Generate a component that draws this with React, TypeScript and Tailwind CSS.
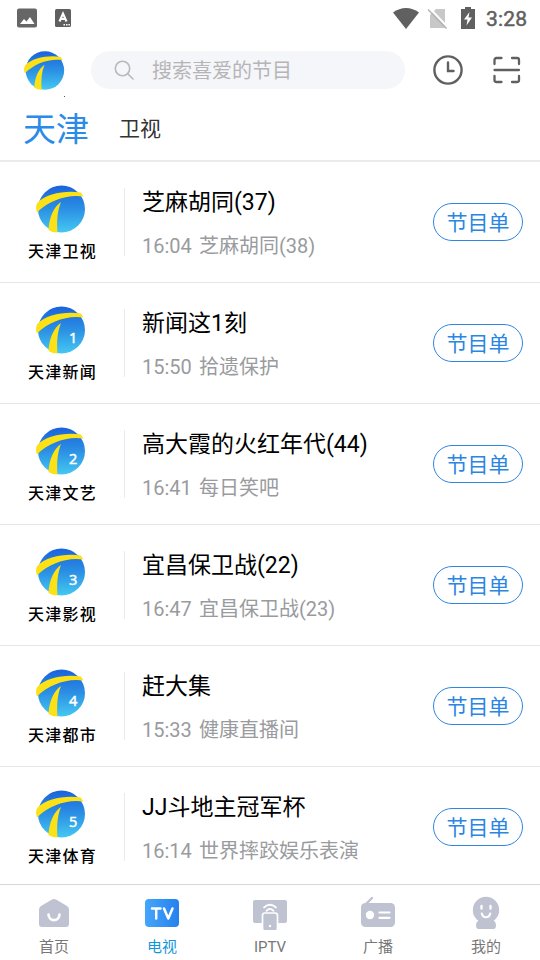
import React, { useState } from 'react';

const channels = [
  { name: '天津卫视', badge: '', title: '芝麻胡同(37)', time: '16:04', next: '芝麻胡同(38)' },
  { name: '天津新闻', badge: '1', title: '新闻这1刻', time: '15:50', next: '拾遗保护' },
  { name: '天津文艺', badge: '2', title: '高大霞的火红年代(44)', time: '16:41', next: '每日笑吧' },
  { name: '天津影视', badge: '3', title: '宜昌保卫战(22)', time: '16:47', next: '宜昌保卫战(23)' },
  { name: '天津都市', badge: '4', title: '赶大集', time: '15:33', next: '健康直播间' },
  { name: '天津体育', badge: '5', title: 'JJ斗地主冠军杯', time: '16:14', next: '世界摔跤娱乐表演' },
];

function ChannelLogo({ id, size, badge }: { id: string; size: number; badge?: string }) {
  return (
    <svg width={size} height={size} viewBox="0 0 50 50" className="shrink-0">
      <defs>
        <linearGradient id={id} x1="0" y1="0" x2="0" y2="1">
          <stop offset="0" stopColor="#1b62dc" />
          <stop offset="0.5" stopColor="#2b90e4" />
          <stop offset="1" stopColor="#45c8f2" />
        </linearGradient>
      </defs>
      <circle cx="25.500" cy="25" r="23.5" fill={`url(#${id})`} />
      <path d="M1 28.500C-0.500 24.500 0 21.500 1.300 19C10 9 31 6 44.800 8.500L47.500 12.500C31 10 13 16.500 1 28.500Z" fill="#fbe116" />
      <path d="M25 18C18 22.500 13 33.500 12.500 46Q16.500 48.500 21.500 48.500C20.500 36.500 21.500 26.500 25 18Z" fill="#fbe116" />
      {badge && (
        <text x="37.200" y="38" textAnchor="middle" fontSize="14.500" fill="#fff" stroke="#fff" strokeWidth="0.500" fontFamily="Open Sans, sans-serif">{badge}</text>
      )}
    </svg>
  );
}

function StatusBar() {
  return (
    <div className="flex h-9 items-center pl-[17px] pr-3 text-[#606060]">
      <svg width="20" height="20" viewBox="0 0 20 20">
        <rect x="0" y="0.500" width="20" height="19" rx="2" fill="#666" />
        <path d="M3 16L7 11L9.500 13.500L13 9L17.500 16Z" fill="#fff" />
      </svg>
      <svg width="16" height="18" viewBox="0 0 16 18" className="ml-[18px]">
        <rect width="16" height="18" rx="1.500" fill="#606060" />
        <path d="M4.500 12.500L8 4.500L11.500 12.500M5.800 10H10.200" stroke="#fff" strokeWidth="2.100" fill="none" />
        <path d="M8.500 15.700h1.500M11 15.700h1.500M13.400 15.700h1.500" stroke="#fff" strokeWidth="1.500" />
      </svg>
      <svg width="26" height="21" viewBox="0 0 26 21" className="ml-auto">
        <path d="M0 4.500C8-1.500 18-1.500 26 4.500L13 21Z" fill="#606060" />
      </svg>
      <svg width="20" height="21" viewBox="0 0 20 21" className="ml-[9px]">
        <path d="M8 1H17V20H2V7Z" fill="#c8c8c8" />
        <path d="M1.500 0L20 19.500" stroke="#fff" strokeWidth="2" />
        <path d="M0 1.500L18.500 20.500" stroke="#b4b4b4" strokeWidth="1.500" />
      </svg>
      <svg width="14" height="22" viewBox="0 0 14 22" className="ml-[13px]">
        <path d="M4 0H10V2H14V22H0V2H4Z" fill="#606060" />
        <path d="M8.500 5L3 12.500H6.500L5.500 18.500L11 10.500H7.500Z" fill="#fff" />
      </svg>
      <span className="ml-[11px] w-[42px] whitespace-nowrap pt-0.5 font-['Roboto',sans-serif] text-[21px] leading-none tracking-[0.2px] [-webkit-text-stroke:0.5px_#606060]">3:28</span>
    </div>
  );
}

function Header() {
  return (
    <header className="relative flex h-[68px] items-center pl-6">
      <ChannelLogo id="brand" size={41} />
      <span className="absolute left-16 top-[60px] size-px bg-[#555]" />
      <div className="ml-[26px] flex h-[38px] w-[314px] shrink-0 items-center rounded-full bg-[#f5f6f9] pl-[23px]">
        <svg width="20" height="20" viewBox="0 0 20 20" fill="none" stroke="#b9b9bb" strokeWidth="1.600" strokeLinecap="round">
          <circle cx="8.500" cy="8.500" r="7.200" />
          <path d="M13.700 13.700L19 19" />
        </svg>
        <span className="ml-[18px] pt-0.5 text-xl leading-none text-[#b5b5b7]">搜索喜爱的节目</span>
      </div>
      <svg width="30" height="30" viewBox="0 0 30 30" fill="none" stroke="#606060" strokeWidth="2.400" className="ml-7 shrink-0">
        <circle cx="15" cy="15" r="13.600" />
        <path d="M15 7.500V16H20.500" strokeLinecap="round" />
      </svg>
      <svg width="28" height="28" viewBox="0 0 28 28" fill="none" stroke="#606060" strokeWidth="2.300" strokeLinecap="round" className="ml-[30px] shrink-0">
        <path d="M1.500 8V4Q1.500 2 3.500 2H8.500M19 2H24Q26 2 26 4V8M1.500 20V24Q1.500 26 3.500 26H8.500M19 26H24Q26 26 26 24V20M1.500 14H26" />
      </svg>
    </header>
  );
}

const HomeIcon = () => (
  <svg width="34" height="34" viewBox="0 0 34 34">
    <path d="M15 3.500Q17 2.300 19 3.500L30 10Q32 11.200 32 13.500V28Q32 31 29 31H5Q2 31 2 28V13.500Q2 11.200 4 10Z" fill="#bfc2d0" />
    <path d="M11.500 18.500C12 26 22 26 22.500 18.500" fill="none" stroke="#fff" strokeWidth="2.700" strokeLinecap="round" />
  </svg>
);

const TvIcon = () => (
  <svg width="34" height="34" viewBox="0 0 34 34">
    <defs>
      <linearGradient id="tv" x1="0" y1="0" x2="1" y2="0">
        <stop offset="0" stopColor="#44a6fb" />
        <stop offset="1" stopColor="#2680ee" />
      </linearGradient>
    </defs>
    <rect x="0" y="3" width="34" height="28" rx="4" fill="url(#tv)" />
    <path d="M7 12.500H15.500M11.200 12.500V22.500M19 12.500L23.300 22.500L27.500 12.500" fill="none" stroke="#fff" strokeWidth="2.500" strokeLinecap="round" strokeLinejoin="round" />
  </svg>
);

const IptvIcon = () => (
  <svg width="34" height="34" viewBox="0 0 34 34">
    <rect x="0" y="4" width="34" height="23" rx="2" fill="#bfc2d0" />
    <path d="M11 11.500Q17 6 23 11.500M13.500 14.800Q17 11 20.500 14.800" fill="none" stroke="#fff" strokeWidth="1.800" strokeLinecap="round" />
    <rect x="9.500" y="17" width="15" height="18" rx="2.500" fill="#bfc2d0" stroke="#fff" strokeWidth="1.700" />
    <circle cx="17" cy="30" r="1.200" fill="#fff" />
  </svg>
);

const RadioIcon = () => (
  <svg width="34" height="34" viewBox="0 0 34 34">
    <path d="M3 10L11 2" stroke="#bfc2d0" strokeWidth="2.400" strokeLinecap="round" />
    <rect x="0" y="7" width="34" height="24" rx="4.500" fill="#bfc2d0" />
    <circle cx="9" cy="19" r="4.200" fill="#fff" />
    <path d="M18.500 16.500H28.500M18.500 21.800H28.500" stroke="#fff" strokeWidth="2.200" strokeLinecap="round" />
  </svg>
);

const MineIcon = () => (
  <svg width="34" height="34" viewBox="0 0 34 34">
    <circle cx="17" cy="14" r="13.200" fill="#bfc2d0" />
    <path d="M9 22H25V25Q27 26 27 29Q27 33 24.500 33H9.500Q7 33 7 29Q7 26 9 25Z" fill="#bfc2d0" />
    <path d="M12.500 10V12.500M21.500 10V12.500" stroke="#fff" strokeWidth="2.400" strokeLinecap="round" />
    <path d="M12.800 17.500C14 22.500 20 22.500 21.200 17.500" fill="none" stroke="#fff" strokeWidth="2.200" strokeLinecap="round" />
  </svg>
);

const tabs = [
  { label: '首页', icon: HomeIcon },
  { label: '电视', icon: TvIcon },
  { label: 'IPTV', icon: IptvIcon },
  { label: '广播', icon: RadioIcon },
  { label: '我的', icon: MineIcon },
];

export default function App() {
  const [active, setActive] = useState('电视');

  return (
    <div className="flex h-[960px] w-[540px] flex-col overflow-hidden bg-white font-['Roboto','Noto_Sans_CJK_SC',sans-serif]">
      <StatusBar />
      <Header />

      {/* Region tabs */}
      <div className="flex h-[58px] shrink-0 items-center border-b-2 border-[#ebebeb] pl-[23px] pb-1.5">
        <span className="text-[33px] leading-none text-[#2a8be8]">天津</span>
        <span className="ml-[30px] text-[21px] leading-none text-[#333]">卫视</span>
      </div>

      {/* Channel list */}
      <main className="min-h-0 flex-1 overflow-hidden">
        {channels.map((c) => (
          <div key={c.name} className="flex h-[121px] items-center border-b border-[#e6e6e6] pr-[17px]">
            <div className="flex w-[124px] flex-col items-center pb-px pr-0.5">
              <ChannelLogo id={`logo-${c.name}`} size={50} badge={c.badge} />
              <span className="mt-1.5 pl-[3px] font-['Noto_Sans_CJK_SC',sans-serif] text-base font-medium leading-5 tracking-[1.3px] text-black">{c.name}</span>
            </div>
            <div className="h-[68px] w-px bg-[#ebebeb]" />
            <div className="ml-[17px] flex-1">
              <div className="pt-1 text-[23px] leading-8 text-black">{c.title}</div>
              <div className="mt-[11px] flex gap-2 text-xl leading-8 text-[#999b9e]">
                <span className="w-[49px]">{c.time}</span>
                <span>{c.next}</span>
              </div>
            </div>
            <button className="h-[38px] w-[90px] rounded-full border border-[#2f86e0] pt-0.5 text-[21px] leading-none text-[#2a86e2]">节目单</button>
          </div>
        ))}
      </main>

      {/* Bottom navigation */}
      <nav className="grid h-[76px] shrink-0 grid-cols-5 border-t border-[#d8d8d8] bg-white">
        {tabs.map(({ label, icon: Icon }) => (
          <button key={label} onClick={() => setActive(label)} className="flex flex-col items-center pt-[11px]">
            <Icon />
            <span className={`mt-[7px] text-[15px] leading-5 ${active === label ? 'text-[#1296db]' : 'text-[#777]'}`}>{label}</span>
          </button>
        ))}
      </nav>
    </div>
  );
}
